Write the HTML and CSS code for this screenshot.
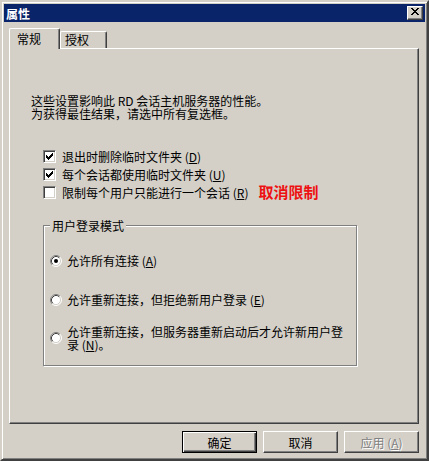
FILE: index.html
```html
<!DOCTYPE html>
<html lang="zh-CN">
<head>
  <meta charset="UTF-8" />
  <title>属性</title>
  <link rel="stylesheet" href="styles.css">
</head>
<body>
  <svg class="defs" width="0" height="0">
    <symbol id="tick" viewBox="0 0 7 7">
      <path d="M6 0h1v1h-1z M5 1h2v1h-2z M0 2h1v1H0z M4 2h3v1H4z M0 3h2v1H0z M3 3h3v1H3z M0 4h5v1H0z M1 5h3v1H1z M2 6h1v1H2z" fill="#000"/>
    </symbol>
    <symbol id="radio" viewBox="0 0 12 12">
      <circle cx="6" cy="6" r="5" fill="#fff"/>
      <path d="M2.11 9.89A5.5 5.5 0 0 1 9.89 2.11" fill="none" stroke="#808080"/>
      <path d="M9.89 2.11A5.5 5.5 0 0 1 2.11 9.89" fill="none" stroke="#fff"/>
      <path d="M2.82 9.18A4.5 4.5 0 0 1 9.18 2.82" fill="none" stroke="#404040"/>
      <path d="M9.18 2.82A4.5 4.5 0 0 1 2.82 9.18" fill="none" stroke="#d4d0c8"/>
    </symbol>
  </svg>

  <div class="window">
    <div class="titlebar">
      <span class="title">属性</span>
      <span class="close">
        <svg width="8" height="7" viewBox="0 0 8 7" shape-rendering="crispEdges">
          <path d="M0 0h2v1H0z M6 0h2v1H6z M1 1h2v1H1z M5 1h2v1H5z M2 2h4v1H2z M3 3h2v1H3z M2 4h4v1H2z M1 5h2v1H1z M5 5h2v1H5z M0 6h2v1H0z M6 6h2v1H6z" fill="#000"/>
        </svg>
      </span>
    </div>

    <div class="tabs">
      <div class="tab active">常规</div>
      <div class="tab">授权</div>
    </div>

    <div class="panel">
      <p class="desc">这些设置影响此 RD 会话主机服务器的性能。<br>为获得最佳结果，请选中所有复选框。</p>

      <ul class="checks">
        <li>
          <span class="cb"><svg width="7" height="7" shape-rendering="crispEdges"><use href="#tick"/></svg></span>
          <span>退出时删除临时文件夹 (<u>D</u>)</span>
        </li>
        <li>
          <span class="cb"><svg width="7" height="7" shape-rendering="crispEdges"><use href="#tick"/></svg></span>
          <span>每个会话都使用临时文件夹 (<u>U</u>)</span>
        </li>
        <li>
          <span class="cb"></span>
          <span>限制每个用户只能进行一个会话 (<u>R</u>)</span>
          <span class="note">取消限制</span>
        </li>
      </ul>

      <div class="group">
        <div class="group-title">用户登录模式</div>
        <ul class="radios">
          <li class="row-1">
            <span class="rb checked"><svg width="12" height="12"><use href="#radio"/></svg></span>
            <span>允许所有连接 (<u>A</u>)</span>
          </li>
          <li class="row-2">
            <span class="rb"><svg width="12" height="12"><use href="#radio"/></svg></span>
            <span>允许重新连接，但拒绝新用户登录 (<u>E</u>)</span>
          </li>
          <li class="row-3">
            <span class="rb"><svg width="12" height="12"><use href="#radio"/></svg></span>
            <span>允许重新连接，但服务器重新启动后才允许新用户登录 (<u>N</u>)。</span>
          </li>
        </ul>
      </div>
    </div>

    <div class="buttons">
      <span class="btn default">确定</span>
      <span class="btn">取消</span>
      <span class="btn disabled">应用 (<u>A</u>)</span>
    </div>
  </div>
</body>
</html>
```

FILE: styles.css
```css
body {
  margin: 0;
  padding: 0;
  font-family: 'Noto Sans CJK SC', 'Noto Sans', sans-serif;
  font-size: 12px;
  color: #000;
}

.defs {
  position: absolute;
  width: 0;
  height: 0;
}

.window {
  width: 429px;
  height: 461px;
  box-sizing: border-box;
  background-color: #d4d0c8;
  border: 2px solid;
  border-color: #d4d0c8 #404040 #404040 #d4d0c8;
  box-shadow: inset 1px 1px #fff, inset -1px -1px #808080;
  padding: 2px;
}

/* barra de titulo */
.titlebar {
  height: 18px;
  background-color: #0a246a;
  display: flex;
  align-items: center;
  justify-content: space-between;
  padding: 0 2px 0 2px;
}

.title {
  color: #fff;
  font-weight: bold;
  line-height: 13px;
}

.close {
  width: 16px;
  height: 14px;
  box-sizing: border-box;
  background-color: #d4d0c8;
  border: 1px solid;
  border-color: #fff #404040 #404040 #fff;
  box-shadow: inset -1px -1px #808080;
  display: flex;
  justify-content: center;
  padding-top: 1px;
}

/* pestañas */
.tabs {
  display: flex;
  align-items: flex-end;
  height: 20px;
  margin-top: 6px;
  padding-left: 5px;
}

.tab {
  box-sizing: border-box;
  height: 17px;
  width: 47px;
  padding: 1px 0 0 4px;
  line-height: 13px;
  border-left: 1px solid #fff;
  border-top: 1px solid #fff;
  border-right: 1px solid #404040;
  border-radius: 2px 2px 0 0;
  box-shadow: inset -1px 0 #808080;
}

.tab.active {
  position: relative;
  z-index: 1;
  height: 21px;
  width: 51px;
  padding: 3px 0 0 7px;
  margin-bottom: -1px;
  background-color: #d4d0c8;
}

/* panel */
.panel {
  box-sizing: border-box;
  width: 410px;
  height: 376px;
  margin-left: 5px;
  border: 1px solid;
  border-color: #fff #404040 #404040 #fff;
  box-shadow: inset -1px -1px #808080;
  padding-left: 21px;
}

.desc {
  margin: 45px 0 0 0;
  line-height: 13px;
}

.checks {
  list-style: none;
  margin: 27px 0 0 12px;
  padding: 0;
}

.checks li {
  height: 18px;
  display: flex;
  align-items: center;
  line-height: 13px;
}

.cb {
  flex: none;
  width: 13px;
  height: 13px;
  box-sizing: border-box;
  border: 1px solid;
  border-color: #808080 #fff #fff #808080;
  box-shadow: inset 1px 1px #404040, inset -1px -1px #d4d0c8;
  background-color: #fff;
  padding: 2px;
  margin-right: 6px;
  display: flex;
}

.note {
  color: #ee1111;
  font-weight: bold;
  font-size: 15px;
  line-height: 16px;
  margin-left: 10px;
}

/* grupo */
.group {
  box-sizing: border-box;
  width: 314px;
  height: 141px;
  margin: 24px 0 0 12px;
  border: 1px solid #808080;
  box-shadow: inset 1px 1px #fff, 1px 1px #fff;
}

.group-title {
  width: fit-content;
  margin: -7px 0 0 6px;
  padding: 0 2px;
  line-height: 13px;
  background-color: #d4d0c8;
}

.radios {
  list-style: none;
  margin: 22px 0 0 0;
  padding: 0 12px 0 6px;
}

.radios li {
  display: flex;
  align-items: center;
  line-height: 13px;
}

.rb {
  flex: none;
  width: 12px;
  height: 12px;
  margin-right: 5px;
  position: relative;
  display: flex;
}

.rb.checked::after {
  content: '';
  position: absolute;
  left: 4px;
  top: 4px;
  width: 4px;
  height: 4px;
  border-radius: 50%;
  background-color: #000;
}

.radios .row-2 {
  margin-top: 26px;
}

.radios .row-3 {
  margin-top: 19px;
}

/* botones */
.buttons {
  display: flex;
  justify-content: flex-end;
  gap: 6px;
  margin-top: 7px;
  padding-right: 6px;
}

.btn {
  box-sizing: border-box;
  width: 75px;
  height: 22px;
  display: flex;
  align-items: center;
  justify-content: center;
  border: 1px solid;
  border-color: #fff #404040 #404040 #fff;
  box-shadow: inset -1px -1px #808080;
  line-height: 13px;
}

.btn.default {
  border-color: #000;
  box-shadow: inset 1px 1px #fff, inset -1px -1px #404040, inset -2px -2px #808080;
}

.btn.disabled {
  color: #808080;
  text-shadow: 1px 1px #fff;
}
```
